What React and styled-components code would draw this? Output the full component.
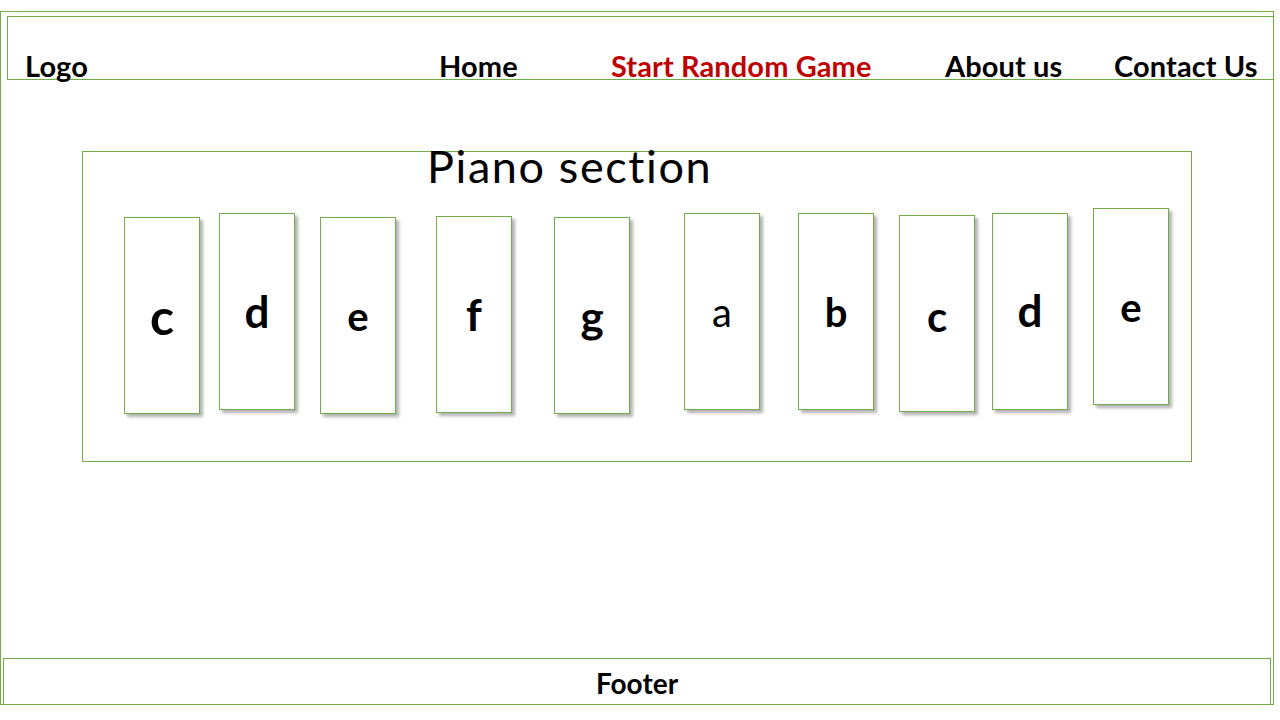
import React from "react";
import styled, { createGlobalStyle } from "styled-components";

const green = "#70ad47";

const keys = [
  { note: "c", gap: 41, top: 9, size: 50, dy: 0 },
  { note: "d", gap: 19, top: 5, size: 44, dy: -1 },
  { note: "e", gap: 25, top: 9, size: 40, dy: 0 },
  { note: "f", gap: 40, top: 8, size: 44, dy: -1 },
  { note: "g", gap: 42, top: 9, size: 44, dy: 0 },
  { note: "a", gap: 54, top: 5, size: 40, dy: 0, light: true },
  { note: "b", gap: 38, top: 5, size: 40, dy: 0 },
  { note: "c", gap: 25, top: 7, size: 42, dy: 2 },
  { note: "d", gap: 17, top: 5, size: 44, dy: -2 },
  { note: "e", gap: 25, top: 0, size: 40, dy: 0 },
];

const App = () => {
  return (
    <>
      <GlobalStyle />
      <Frame>
        <Header>
          <NavItem>Logo</NavItem>
          <NavItem>Home</NavItem>
          <NavItem $active>Start Random Game</NavItem>
          <NavItem>About us</NavItem>
          <NavItem>Contact Us</NavItem>
        </Header>
        <PianoSection>
          <SectionTitle>Piano section</SectionTitle>
          <KeyRow>
            {keys.map((k, i) => (
              <Key key={i} $gap={k.gap} $top={k.top}>
                <KeyLabel $size={k.size} $dy={k.dy} $light={k.light}>
                  {k.note}
                </KeyLabel>
              </Key>
            ))}
          </KeyRow>
        </PianoSection>
        <Footer>Footer</Footer>
      </Frame>
    </>
  );
};

const GlobalStyle = createGlobalStyle`
  body {
    margin: 0;
    background: #fff;
    font-family: Lato, "Open Sans", sans-serif;
    color: #000;
  }
`;

const Frame = styled.div`
  box-sizing: border-box;
  margin-top: 11px;
  width: 1274px;
  height: 694px;
  border: 1px solid ${green};
`;

const Header = styled.header`
  box-sizing: border-box;
  margin: 4px -1px 0 6px;
  height: 64px;
  border: 1px solid ${green};
  display: grid;
  grid-template-columns: 414px 172px 334px 169px 1fr;
  align-items: start;
  padding: 34px 0 0 17px;
`;

const NavItem = styled.a`
  font-size: 29px;
  line-height: 29px;
  font-weight: 700;
  letter-spacing: 0.1px;
  white-space: nowrap;
  color: ${(p) => (p.$active ? "#c00000" : "#000")};
  cursor: pointer;
`;

const PianoSection = styled.section`
  box-sizing: border-box;
  margin: 71px 0 0 81px;
  width: 1110px;
  height: 311px;
  border: 1px solid ${green};
`;

const SectionTitle = styled.h2`
  margin: -8px 0 0 344px;
  height: 45px;
  font-size: 45px;
  line-height: 45px;
  font-weight: 400;
  letter-spacing: 1.6px;
`;

const KeyRow = styled.div`
  display: flex;
  align-items: flex-start;
  margin-top: 19px;
`;

const Key = styled.div`
  box-sizing: border-box;
  flex: none;
  width: 76px;
  height: 197px;
  margin-left: ${(p) => p.$gap}px;
  margin-top: ${(p) => p.$top}px;
  border: 1px solid ${green};
  background: #fff;
  box-shadow: 3px 3px 3px rgba(0, 0, 0, 0.3);
  display: flex;
  align-items: center;
  justify-content: center;
`;

const KeyLabel = styled.span`
  font-size: ${(p) => p.$size}px;
  line-height: 1;
  font-weight: ${(p) => (p.$light ? 400 : 700)};
  transform: translateY(${(p) => p.$dy}px);
`;

const Footer = styled.footer`
  box-sizing: border-box;
  margin: 196px 0 0 2px;
  width: 1268px;
  height: 52px;
  border: 1px solid ${green};
  text-align: center;
  font-size: 28px;
  line-height: 28px;
  font-weight: 700;
  padding-top: 10px;
`;

export default App;
